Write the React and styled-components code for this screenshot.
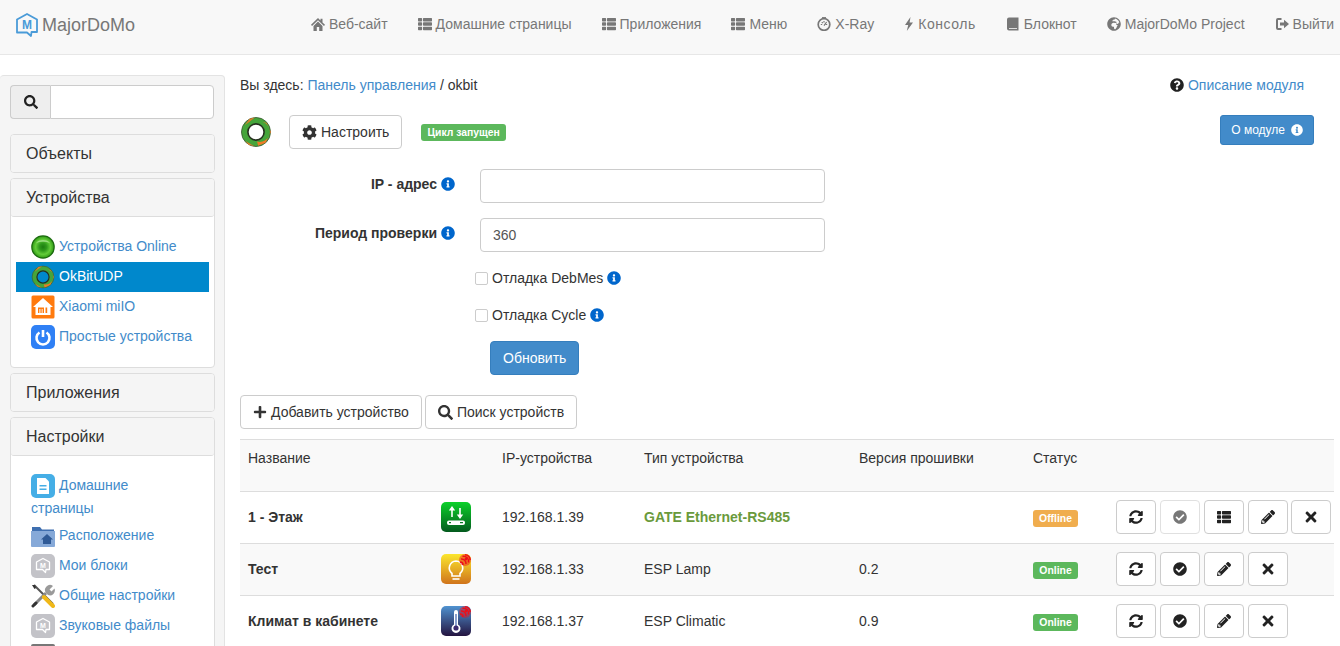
import React from 'react';
import styled, { createGlobalStyle } from 'styled-components';
import {
  FaThList, FaGlobeAfrica, FaSearch, FaCog, FaPlus,
  FaSyncAlt, FaCheckCircle, FaPencilAlt, FaTimes, FaInfoCircle, FaQuestionCircle,
} from 'react-icons/fa';

const GlobalStyle = createGlobalStyle`
  html, body {
    margin: 0;
    height: 646px;
    overflow: hidden;
    background: #fff;
    font-family: "Liberation Sans", Arial, sans-serif;
    font-size: 14px;
    line-height: 20px;
    color: #333;
  }
  * { box-sizing: border-box; }
`;

const Navbar = styled.header`
  display: flex;
  align-items: center;
  justify-content: space-between;
  height: 55px;
  padding: 0 6px 6px 15px;
  background: #f8f8f8;
  border-bottom: 1px solid #e7e7e7;
`;

const Brand = styled.div`
  display: flex;
  align-items: center;
  gap: 3px;
  margin-top: 2px;
  font-size: 18px;
  color: #777;
`;

const Nav = styled.nav`
  display: flex;
  gap: 30px;
`;

const NavItem = styled.a`
  display: flex;
  align-items: center;
  gap: 4px;
  color: #777;
  letter-spacing: ${p => p.$track || 'normal'};
  white-space: nowrap;
  svg { flex: none; }
`;

const Page = styled.div`
  display: flex;
  align-items: flex-start;
  padding-top: 20px;
`;

const Sidebar = styled.aside`
  flex: none;
  width: 225px;
  padding: 9px 9px 0 10px;
  background: #f5f5f5;
  border: 1px solid #e3e3e3;
  border-left: 0;
  border-radius: 4px;
`;

const SearchGroup = styled.div`
  display: flex;
  height: 34px;
  margin: 0 1px 15px 0;
`;

const SearchAddon = styled.span`
  display: flex;
  flex: none;
  align-items: center;
  justify-content: center;
  width: 40px;
  background: #eee;
  border: 1px solid #ccc;
  border-right: 0;
  border-radius: 4px 0 0 4px;
`;

const SearchInput = styled.input`
  flex: 1;
  min-width: 0;
  background: #fff;
  border: 1px solid #ccc;
  border-radius: 0 4px 4px 0;
`;

const Panel = styled.section`
  margin-bottom: 5px;
  background: #fff;
  border: 1px solid #ddd;
  border-radius: 4px;
`;

const PanelHeading = styled.h4`
  margin: 0;
  padding: 10px 15px;
  height: ${p => (p.$open ? '38px' : '37px')};
  font-size: 16px;
  font-weight: 400;
  line-height: 18px;
  color: #333;
  background: #f5f5f5;
  border-bottom: ${p => (p.$open ? '1px solid #ddd' : '0')};
  border-radius: 3px;
`;

const PanelBody = styled.div`
  padding: 15px 5px;
`;

const MenuItem = styled.a`
  display: block;
  padding: 3px 15px;
  color: ${p => (p.$active ? '#fff' : '#428bca')};
  background: ${p => (p.$active ? '#0088cc' : 'transparent')};
  svg {
    vertical-align: middle;
    margin-right: 4px;
  }
`;

const Main = styled.main`
  flex: 1;
  min-width: 0;
  padding: 0 6px 0 15px;
`;

const TopLine = styled.div`
  display: flex;
  justify-content: space-between;
  height: 20px;
  margin-bottom: 20px;
`;

const Link = styled.a`
  color: #428bca;
`;

const HelpLink = styled.a`
  display: flex;
  align-items: center;
  gap: 4px;
  margin-right: 30px;
  color: #428bca;
`;

const ModuleBar = styled.div`
  display: flex;
  align-items: center;
  height: 34px;
  margin-bottom: 20px;
`;

const Button = styled.button`
  display: inline-flex;
  align-items: center;
  justify-content: center;
  gap: 4px;
  height: 34px;
  padding: 0 12px;
  font: inherit;
  color: #333;
  background: #fff;
  border: 1px solid #ccc;
  border-radius: 4px;
  white-space: nowrap;
`;

const ConfigButton = styled(Button)`
  margin-left: 17px;
`;

const PrimaryButton = styled(Button)`
  color: #fff;
  background: #428bca;
  border-color: #357ebd;
`;

const AboutButton = styled(PrimaryButton)`
  align-self: flex-start;
  height: 30px;
  margin-left: auto;
  margin-right: 20px;
  padding: 0 10px;
  gap: 6px;
  font-size: 12px;
  line-height: 18px;
  border-radius: 3px;
`;

const Badge = styled.span`
  display: inline-block;
  height: 17px;
  font-size: 10.4px;
  font-weight: 700;
  line-height: 17px;
  color: #fff;
  background: ${p => p.$color || '#5cb85c'};
  border-radius: 3px;
  white-space: nowrap;
`;

const StateBadge = styled(Badge)`
  margin-left: 19px;
  padding: 0 6px;
`;

const StatusBadge = styled(Badge)`
  width: 45px;
  text-align: center;
`;

const Form = styled.form`
  display: grid;
  grid-template-columns: 215px 345px;
  column-gap: 25px;
  row-gap: 15px;
  align-items: center;
`;

const FieldLabel = styled.label`
  display: flex;
  justify-content: flex-end;
  align-items: center;
  gap: 4px;
  font-weight: 700;
  margin-top: -4px;
`;

const TextInput = styled.input`
  height: 34px;
  padding: 6px 12px;
  font: inherit;
  color: #555;
  background: #fff;
  border: 1px solid #ccc;
  border-radius: 4px;
`;

const CheckRow = styled.label`
  grid-column: 2;
  display: flex;
  align-items: center;
  height: 22px;
  margin-left: -5px;
  gap: 4px;
  color: #333;
`;

const CheckBox = styled.span`
  flex: none;
  width: 13px;
  height: 13px;
  background: #fff;
  border: 1px solid #ccc;
  border-radius: 2px;
`;

const SubmitCell = styled.div`
  grid-column: 2;
  margin-left: 10px;
`;

const Toolbar = styled.div`
  display: flex;
  gap: 3px;
  margin: 20px 0 10px;
`;

const Table = styled.table`
  width: 100%;
  table-layout: fixed;
  border-collapse: collapse;
`;

const HeadCell = styled.th`
  height: 52px;
  padding: 8px;
  vertical-align: top;
  text-align: left;
  font-weight: 400;
  background: #f9f9f9;
  border-top: 1px solid #ddd;
  border-bottom: 1px solid #ddd;
`;

const Cell = styled.td`
  height: 52px;
  padding: 7px 8px 9px;
  vertical-align: middle;
  background: ${p => (p.$striped ? '#f9f9f9' : '#fff')};
  border-bottom: 1px solid #ddd;
  font-weight: ${p => (p.$bold ? 700 : 400)};
  color: ${p => p.$color || '#333'};
`;

const IconCell = styled(Cell)`
  padding: 0 23px 2px 0;
  text-align: right;
  svg { display: inline-block; vertical-align: middle; }
`;

const Actions = styled.div`
  display: flex;
  gap: 4px;
`;

const ActionButton = styled(Button)`
  flex: none;
  width: 40px;
  padding: 0;
  color: ${p => (p.$disabled ? '#777' : '#222')};
  border-color: ${p => (p.$disabled ? '#e0e0e0' : '#ccc')};
  margin-left: ${p => (p.$tight ? '-1px' : '0')};
`;

const Logo = () => (
  <svg width="24" height="26" viewBox="0 0 24 26">
    <path d="M12 2 22 7.5V20H16.5L16 24 12 20.5H2V7.5Z" fill="none" stroke="#4a9bd8" strokeWidth="1.8" strokeLinejoin="round" />
    <text x="12" y="17" textAnchor="middle" fontFamily="Liberation Sans" fontSize="12" fontWeight="700" fill="#4a9bd8">M</text>
  </svg>
);

// зелёное кольцо с оранжевым клином справа, дырка цвета фона
const OkBitIcon = ({ size = 24, hole = '#fff' }) => (
  <svg width={size} height={size} viewBox="0 0 30 30">
    <circle cx="15" cy="15" r="13.6" fill="#45a53a" stroke="#3d5a34" strokeWidth=".8" />
    <path d="M9 2.5 14 1.5 8 6 4.5 8.5ZM8 27 5 23.5 9.5 26 14 28.5Z" fill="#dc7a2c" />
    <path d="M21 5.5 25 6.5 29 15 24 25 17 28 16 24A9.5 9.5 0 0 0 21 5.5Z" fill="#ee7a26" />
    <circle cx="15" cy="15" r="7.6" fill={hole} stroke="#26301f" strokeWidth="1.5" />
  </svg>
);

const OnlineIcon = () => (
  <svg width="24" height="24" viewBox="0 0 24 24">
    <defs>
      <radialGradient id="onlineGlow" cx=".5" cy=".5" r=".5">
        <stop offset="0" stopColor="#1c7c10" />
        <stop offset=".35" stopColor="#2f9a1c" />
        <stop offset=".7" stopColor="#63cc3a" />
        <stop offset="1" stopColor="#35a018" />
      </radialGradient>
    </defs>
    <circle cx="12" cy="12" r="11.8" fill="#1a680e" />
    <circle cx="12" cy="12" r="10.6" fill="url(#onlineGlow)" />
    <path d="M5 8A8 6 0 0 1 19 8 13 7 0 0 0 5 8Z" fill="#c5f0b0" fillOpacity=".6" />
  </svg>
);

const XiaomiIcon = () => (
  <svg width="24" height="24" viewBox="0 0 24 24">
    <rect x=".5" y=".5" width="23" height="23" rx="1.5" fill="#ff7a0e" />
    <path d="M12 3 22 12H19.5V20H4.5V12H2Z" fill="#fff" />
    <path d="M7 12.5H13V18H11.6V14H10.7V18H9.4V14H8.4V18H7ZM14.5 12.5H16.2V18H14.5Z" fill="#ff7a0e" />
  </svg>
);

const PowerIcon = () => (
  <svg width="24" height="24" viewBox="0 0 24 24">
    <rect width="24" height="24" rx="5" fill="#2f80f5" />
    <path d="M8.5 7.5A6.5 6.5 0 1 0 15.5 7.5" fill="none" stroke="#fff" strokeWidth="2.6" />
    <path d="M12 5V12" stroke="#fff" strokeWidth="2.6" />
  </svg>
);

const PagesIcon = () => (
  <svg width="24" height="24" viewBox="0 0 24 24">
    <rect width="24" height="24" rx="5" fill="#45aee6" />
    <path d="M6 4H14.5L18 7.5V20H6Z" fill="#fff" />
    <path d="M8.5 11H15.5V12.5H8.5ZM8.5 14.5H15.5V16H8.5Z" fill="#45aee6" />
  </svg>
);

const FolderIcon = () => (
  <svg width="24" height="24" viewBox="0 0 24 24">
    <path d="M1 3H9L11 5.5H23V9H1Z" fill="#3f6fb0" />
    <path d="M0 7H24V22A1 1 0 0 1 23 23H1A1 1 0 0 1 0 22Z" fill="#86a9d8" />
    <path d="M16 10 22 15.5H20V20H12V15.5H10Z" fill="#2f5a96" />
  </svg>
);

const BlockIcon = () => (
  <svg width="24" height="24" viewBox="0 0 24 24">
    <rect width="24" height="24" rx="5" fill="#c3c3c8" />
    <path d="M12 4.5 18.5 8V15.5H15L14.5 18.5 11.5 15.5H5.5V8Z" fill="none" stroke="#fff" strokeWidth="1.3" strokeLinejoin="round" />
    <text x="12" y="13.5" textAnchor="middle" fontFamily="Liberation Sans" fontSize="7" fontWeight="700" fill="#fff">M</text>
  </svg>
);

const ToolsIcon = () => (
  <svg width="24" height="24" viewBox="0 0 24 24">
    <path d="M3 1 22 20" stroke="#555" strokeWidth="2" />
    <path d="M1 1 4 1 5 4 3.5 5Z" fill="#333" />
    <path d="M3 21 15 9" stroke="#8a8a8a" strokeWidth="3" />
    <path d="M15 9A5 5 0 0 1 22 2L18.5 5.5 20.5 7.5 23.5 4.5A5 5 0 0 1 17 11Z" fill="#9a9a9a" />
    <path d="M13 13 22 22" stroke="#f0b818" strokeWidth="4" strokeLinecap="round" />
    <path d="M2 22 5 19" stroke="#333" strokeWidth="3" strokeLinecap="round" />
  </svg>
);

const GrayTile = () => (
  <svg width="24" height="24" viewBox="0 0 24 24">
    <rect width="24" height="24" rx="2" fill="#777" />
  </svg>
);

const DeviceTile = ({ id, from, to, children, wifi }) => (
  <svg width="30" height="30" viewBox="0 0 30 30">
    <defs>
      <linearGradient id={id} x1="0" y1="0" x2="0" y2="1">
        <stop offset="0" stopColor={from} />
        <stop offset="1" stopColor={to} />
      </linearGradient>
    </defs>
    <rect width="30" height="30" rx="5" fill={`url(#${id})`} />
    {children}
    {wifi && (
      <g fill="none" stroke="#ec0f18" strokeWidth="1.5">
        <circle cx="24" cy="6" r="6" fill="#ec0f18" fillOpacity=".45" stroke="none" />
        <path d="M24 .8A5.2 5.2 0 0 1 29.2 6M21.5 2.5A5 5 0 0 1 27.5 8.5M20 5A4.5 4.5 0 0 1 25 10M19 8A3 3 0 0 1 22 11" />
        <circle cx="25" cy="5" r="1.4" fill="#ec0f18" stroke="none" />
      </g>
    )}
  </svg>
);

const GateIcon = () => (
  <DeviceTile id="gate" from="#0bd12a" to="#045a1e">
    <path d="M11 15V7M19 6V14" stroke="#fff" strokeWidth="1.6" />
    <path d="M11 4 7.8 8.5H14.2ZM19 17 15.8 12.5H22.2Z" fill="#fff" />
    <rect x="6" y="18.5" width="18" height="4.5" rx="2" fill="#fff" />
    <path d="M8 20.7H10M19 20.7H22" stroke="#0a7a24" strokeWidth="1.2" />
  </DeviceTile>
);

const LampIcon = () => (
  <DeviceTile id="lamp" from="#fbe62d" to="#d0741c" wifi>
    <path d="M15 7A7 7 0 0 0 11 19.5V22H19V19.5A7 7 0 0 0 15 7Z" fill="none" stroke="#fff" strokeWidth="1.6" />
    <path d="M11.5 25H18.5" stroke="#fff" strokeWidth="1.6" />
  </DeviceTile>
);

const ThermoIcon = () => (
  <DeviceTile id="thermo" from="#4f92d0" to="#241440" wifi>
    <path d="M13 6A2 2 0 0 1 17 6V18.5A4.5 4.5 0 1 1 13 18.5Z" fill="#fff" />
    <path d="M14.3 8H15.7V20H14.3Z" fill="#5a78b8" />
    <circle cx="15" cy="22" r="2.6" fill="#3c2b70" />
  </DeviceTile>
);

const GlyphHome = () => (
  <svg width="14" height="14" viewBox="0 0 14 14" fill="#777">
    <path d="M7 1 0 7.8 1 9 7 3.2 13 9 14 7.8 11.5 5.4V1.8H9.5V3.4Z" />
    <path d="M7 4.6 2.5 9V14H5.8V10H8.2V14H11.5V9Z" />
  </svg>
);

const GlyphDashboard = () => (
  <svg width="14" height="14" viewBox="0 0 14 14">
    <circle cx="7" cy="7.5" r="5.8" fill="none" stroke="#777" strokeWidth="1.7" />
    <path d="M5 .8H9" stroke="#777" strokeWidth="1.4" />
    <path d="M7 4V5.4M3.8 7.5H5.2M8.8 7.5H10.2M4.8 5.2 5.8 6.2M9.6 5 7 8.6" stroke="#777" strokeWidth="1.2" />
  </svg>
);

const GlyphBolt = () => (
  <svg width="10" height="14" viewBox="0 0 10 14" fill="#777">
    <path d="M6.5 0 1 8H4.2L2.8 14 9 5.5H5.6Z" />
  </svg>
);

const GlyphBook = () => (
  <svg width="14" height="14" viewBox="0 0 14 14" fill="#777">
    <path d="M3 .5H12.5V13.5H3A2 2 0 0 1 1 11.5V2.5A2 2 0 0 1 3 .5Z" />
    <path d="M3 11H11V11.8H3Z" fill="#f8f8f8" />
  </svg>
);

const GlyphLogout = () => (
  <svg width="14" height="14" viewBox="0 0 14 14" fill="#777">
    <path d="M1 3A2 2 0 0 1 3 1H6.5V3H3V11H6.5V13H3A2 2 0 0 1 1 11Z" />
    <path d="M5 5.5H9V2.8L14 7 9 11.2V8.5H5Z" />
  </svg>
);

const InfoMark = () => <FaInfoCircle size={14} color="#0066cc" />;

const navItems = [
  [<GlyphHome key="i" />, 'Веб-сайт'],
  [<FaThList size={14} key="i" />, 'Домашние страницы'],
  [<FaThList size={14} key="i" />, 'Приложения'],
  [<FaThList size={14} key="i" />, 'Меню'],
  [<GlyphDashboard key="i" />, 'X-Ray'],
  [<GlyphBolt key="i" />, 'Консоль', '0.55px'],
  [<GlyphBook key="i" />, 'Блокнот'],
  [<FaGlobeAfrica size={14} key="i" />, 'MajorDoMo Project'],
  [<GlyphLogout key="i" />, 'Выйти'],
];

const deviceMenu = [
  [<OnlineIcon key="i" />, 'Устройства Online'],
  [<OkBitIcon key="i" hole="#0088cc" />, 'OkBitUDP', true],
  [<XiaomiIcon key="i" />, 'Xiaomi miIO'],
  [<PowerIcon key="i" />, 'Простые устройства'],
];

// последний пункт виден только верхним краем иконки
const settingsMenu = [
  [<PagesIcon key="i" />, 'Домашние страницы'],
  [<FolderIcon key="i" />, 'Расположение'],
  [<BlockIcon key="i" />, 'Мои блоки'],
  [<ToolsIcon key="i" />, 'Общие настройки'],
  [<BlockIcon key="i" />, 'Звуковые файлы'],
  [<GrayTile key="i" />, ''],
];

const devices = [
  { name: '1 - Этаж', icon: <GateIcon />, ip: '192.168.1.39', type: 'GATE Ethernet-RS485', gate: true, version: '', status: 'Offline' },
  { name: 'Тест', icon: <LampIcon />, ip: '192.168.1.33', type: 'ESP Lamp', version: '0.2', status: 'Online', striped: true },
  { name: 'Климат в кабинете', icon: <ThermoIcon />, ip: '192.168.1.37', type: 'ESP Climatic', version: '0.9', status: 'Online' },
];

const columns = [
  ['Название', 194], ['', 60], ['IP-устройства', 142], ['Тип устройства', 215],
  ['Версия прошивки', 174], ['Статус', 83], ['', 226],
];

export default function App() {
  return (
    <>
      <GlobalStyle />
      <Navbar>
        <Brand><Logo />MajorDoMo</Brand>
        <Nav>
          {navItems.map(([icon, label, track]) => (
            <NavItem key={label} $track={track}>{icon}{label}</NavItem>
          ))}
        </Nav>
      </Navbar>
      <Page>
        <Sidebar>
          <SearchGroup>
            <SearchAddon><FaSearch size={14} color="#222" /></SearchAddon>
            <SearchInput />
          </SearchGroup>
          <Panel><PanelHeading>Объекты</PanelHeading></Panel>
          <Panel>
            <PanelHeading $open>Устройства</PanelHeading>
            <PanelBody>
              {deviceMenu.map(([icon, label, active]) => (
                <MenuItem key={label} $active={active}>{icon}{label}</MenuItem>
              ))}
            </PanelBody>
          </Panel>
          <Panel><PanelHeading>Приложения</PanelHeading></Panel>
          <Panel>
            <PanelHeading $open>Настройки</PanelHeading>
            <PanelBody>
              {settingsMenu.map(([icon, label], i) => (
                <MenuItem key={i}>{icon}{label}</MenuItem>
              ))}
            </PanelBody>
          </Panel>
        </Sidebar>
        <Main>
          <TopLine>
            <span>Вы здесь: <Link>Панель управления</Link> / okbit</span>
            <HelpLink><FaQuestionCircle size={14} color="#222" />Описание модуля</HelpLink>
          </TopLine>
          <ModuleBar>
            <OkBitIcon size={32} />
            <ConfigButton><FaCog size={15} />Настроить</ConfigButton>
            <StateBadge>Цикл запущен</StateBadge>
            <AboutButton>О модуле<FaInfoCircle size={12} /></AboutButton>
          </ModuleBar>
          <Form>
            <FieldLabel>IP - адрес <InfoMark /></FieldLabel>
            <TextInput />
            <FieldLabel>Период проверки <InfoMark /></FieldLabel>
            <TextInput defaultValue="360" />
            <CheckRow><CheckBox />Отладка DebMes <InfoMark /></CheckRow>
            <CheckRow><CheckBox />Отладка Cycle <InfoMark /></CheckRow>
            <SubmitCell><PrimaryButton type="button">Обновить</PrimaryButton></SubmitCell>
          </Form>
          <Toolbar>
            <Button><FaPlus size={14} />Добавить устройство</Button>
            <Button><FaSearch size={15} />Поиск устройств</Button>
          </Toolbar>
          <Table>
            <colgroup>
              {columns.map(([, w], i) => <col key={i} width={w} />)}
            </colgroup>
            <thead>
              <tr>
                {columns.map(([title], i) => <HeadCell key={i}>{title}</HeadCell>)}
              </tr>
            </thead>
            <tbody>
              {devices.map(d => (
                <tr key={d.name}>
                  <Cell $striped={d.striped} $bold>{d.name}</Cell>
                  <IconCell $striped={d.striped}>{d.icon}</IconCell>
                  <Cell $striped={d.striped}>{d.ip}</Cell>
                  <Cell $striped={d.striped} $bold={d.gate} $color={d.gate ? '#6a9a3c' : undefined}>{d.type}</Cell>
                  <Cell $striped={d.striped}>{d.version}</Cell>
                  <Cell $striped={d.striped}>
                    <StatusBadge $color={d.status === 'Online' ? '#5cb85c' : '#f0ad4e'}>{d.status}</StatusBadge>
                  </Cell>
                  <Cell $striped={d.striped}>
                    <Actions>
                      <ActionButton><FaSyncAlt size={14} /></ActionButton>
                      <ActionButton $disabled={d.gate}><FaCheckCircle size={14} /></ActionButton>
                      {d.gate && <ActionButton><FaThList size={14} /></ActionButton>}
                      <ActionButton><FaPencilAlt size={14} /></ActionButton>
                      <ActionButton $tight={d.gate}><FaTimes size={16} /></ActionButton>
                    </Actions>
                  </Cell>
                </tr>
              ))}
            </tbody>
          </Table>
        </Main>
      </Page>
    </>
  );
}
